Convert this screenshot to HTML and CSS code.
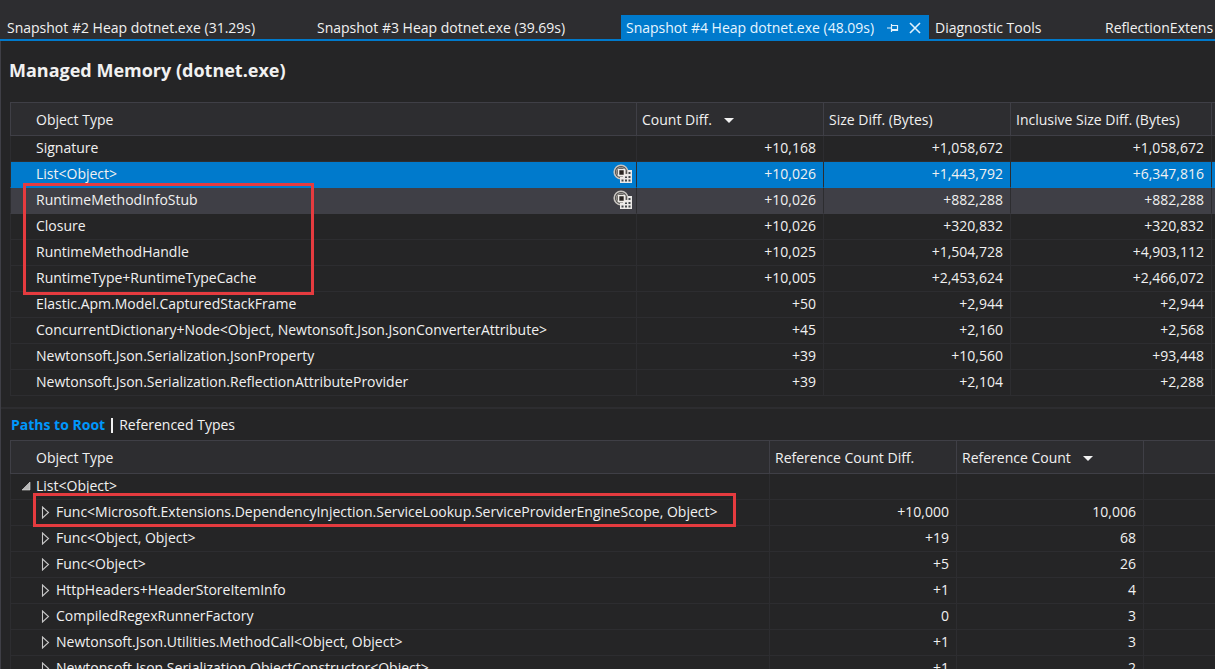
FILE: index.html
```html
<!DOCTYPE html>
<html lang="en">
<head>
<meta charset="utf-8">
<title>Managed Memory (dotnet.exe)</title>
<link rel="stylesheet" href="styles.css">
</head>
<body>
<svg class="defs" aria-hidden="true">
  <symbol id="instances" viewBox="0 0 20 20">
    <circle cx="8" cy="8" r="6.8" fill="#3a3836" stroke="#c8c5c1" stroke-width="1.6"/>
    <circle cx="8" cy="8" r="4.8" fill="none" stroke="#a5a29f" stroke-width="1"/>
    <path d="M10 10h5V6h4v13H7v-6h3z" fill="#ebe9e7"/>
    <path d="M5.500 5.500h6v6h-6z" fill="#292421" stroke="#f0ede9" stroke-width="1.6"/>
    <path d="M15.500 8h2v2h-2zM15.500 12h2v2h-2zM15.500 15.500h2v2h-2zM12 15.500h2v2h-2zM8.500 15.500h2v2h-2zM12 12.500h2v1.500h-2z" fill="#42464a"/>
  </symbol>
  <symbol id="closed" viewBox="0 0 9 13">
    <path d="M1.500 1v11L7.500 6.500z" fill="none" stroke="#c8c8c8" stroke-width="1.1"/>
  </symbol>
  <symbol id="open" viewBox="0 0 10 10"><path d="M9 1v8H1z" fill="#b8b8b8" stroke="#dedede" stroke-width=".6"/></symbol>
</svg>

<nav class="tabs" aria-label="Documents">
  <button class="tab tab-wide">Snapshot #2 Heap dotnet.exe (31.29s)</button>
  <button class="tab tab-wide">Snapshot #3 Heap dotnet.exe (39.69s)</button>
  <div class="tab-active">
    <button class="tab-title" aria-current="page">Snapshot #4 Heap dotnet.exe (48.09s)</button>
    <button class="tab-icon" aria-label="Pin tab"><svg width="12" height="12" viewBox="0 0 12 12" fill="none" stroke="#e2f1fc"><path d="M0 6h4M4.500 2v8M5 3.500h6M5 7.500h6M5 8.500h6M10.500 3v6" stroke-width="1.2"/></svg></button>
    <button class="tab-icon" aria-label="Close tab"><svg width="12" height="12" viewBox="0 0 12 12" fill="none" stroke="#e2f1fc"><path d="M1 1l10 10M11 1L1 11" stroke-width="1.6"/></svg></button>
  </div>
  <button class="tab tab-tools">Diagnostic Tools</button>
  <button class="tab">ReflectionExtens</button>
</nav>

<main class="document">
  <h1 class="title">Managed Memory (dotnet.exe)</h1>

  <section class="pane">
    <table class="grid">
      <colgroup><col><col class="col-number"><col class="col-number"><col class="col-inclusive"><col class="col-end"></colgroup>
      <thead>
        <tr><th>Object Type</th><th>Count Diff.<span class="sort"></span></th><th>Size Diff. (Bytes)</th><th>Inclusive Size Diff. (Bytes)</th><th></th></tr>
      </thead>
      <tbody>
        <tr><td>Signature</td><td>+10,168</td><td>+1,058,672</td><td>+1,058,672</td><td></td></tr>
        <tr class="selected"><td><div class="name">List&lt;Object&gt;<button class="instances" aria-label="View instances"><svg width="20" height="20"><use href="#instances"/></svg></button></div></td><td>+10,026</td><td>+1,443,792</td><td>+6,347,816</td><td></td></tr>
        <tr class="hover"><td><div class="name">RuntimeMethodInfoStub<button class="instances" aria-label="View instances"><svg width="20" height="20"><use href="#instances"/></svg></button></div></td><td>+10,026</td><td>+882,288</td><td>+882,288</td><td></td></tr>
        <tr><td>Closure</td><td>+10,026</td><td>+320,832</td><td>+320,832</td><td></td></tr>
        <tr><td>RuntimeMethodHandle</td><td>+10,025</td><td>+1,504,728</td><td>+4,903,112</td><td></td></tr>
        <tr><td>RuntimeType+RuntimeTypeCache</td><td>+10,005</td><td>+2,453,624</td><td>+2,466,072</td><td></td></tr>
        <tr><td>Elastic.Apm.Model.CapturedStackFrame</td><td>+50</td><td>+2,944</td><td>+2,944</td><td></td></tr>
        <tr><td>ConcurrentDictionary+Node&lt;Object, Newtonsoft.Json.JsonConverterAttribute&gt;</td><td>+45</td><td>+2,160</td><td>+2,568</td><td></td></tr>
        <tr><td>Newtonsoft.Json.Serialization.JsonProperty</td><td>+39</td><td>+10,560</td><td>+93,448</td><td></td></tr>
        <tr><td>Newtonsoft.Json.Serialization.ReflectionAttributeProvider</td><td>+39</td><td>+2,104</td><td>+2,288</td><td></td></tr>
      </tbody>
    </table>
    <div class="mark mark-types"></div>
  </section>

  <div class="views">
    <button class="view view-current">Paths to Root</button><span class="divider"></span><button class="view">Referenced Types</button>
  </div>

  <section class="pane">
    <table class="grid">
      <colgroup><col><col class="col-number"><col class="col-number"><col class="col-rest"></colgroup>
      <thead>
        <tr><th>Object Type</th><th>Reference Count Diff.</th><th>Reference Count<span class="sort"></span></th><th></th></tr>
      </thead>
      <tbody>
        <tr><td class="tree root"><div class="node"><button class="toggle" aria-label="Collapse"><svg width="10" height="10"><use href="#open"/></svg></button>List&lt;Object&gt;</div></td><td></td><td></td><td></td></tr>
        <tr><td class="tree"><div class="node"><button class="toggle" aria-label="Expand"><svg width="9" height="13"><use href="#closed"/></svg></button>Func&lt;Microsoft.Extensions.DependencyInjection.ServiceLookup.ServiceProviderEngineScope, Object&gt;</div></td><td>+10,000</td><td>10,006</td><td></td></tr>
        <tr><td class="tree"><div class="node"><button class="toggle" aria-label="Expand"><svg width="9" height="13"><use href="#closed"/></svg></button>Func&lt;Object, Object&gt;</div></td><td>+19</td><td>68</td><td></td></tr>
        <tr><td class="tree"><div class="node"><button class="toggle" aria-label="Expand"><svg width="9" height="13"><use href="#closed"/></svg></button>Func&lt;Object&gt;</div></td><td>+5</td><td>26</td><td></td></tr>
        <tr><td class="tree"><div class="node"><button class="toggle" aria-label="Expand"><svg width="9" height="13"><use href="#closed"/></svg></button>HttpHeaders+HeaderStoreItemInfo</div></td><td>+1</td><td>4</td><td></td></tr>
        <tr><td class="tree"><div class="node"><button class="toggle" aria-label="Expand"><svg width="9" height="13"><use href="#closed"/></svg></button>CompiledRegexRunnerFactory</div></td><td>0</td><td>3</td><td></td></tr>
        <tr><td class="tree"><div class="node"><button class="toggle" aria-label="Expand"><svg width="9" height="13"><use href="#closed"/></svg></button>Newtonsoft.Json.Utilities.MethodCall&lt;Object, Object&gt;</div></td><td>+1</td><td>3</td><td></td></tr>
        <tr><td class="tree"><div class="node"><button class="toggle" aria-label="Expand"><svg width="9" height="13"><use href="#closed"/></svg></button>Newtonsoft.Json.Serialization.ObjectConstructor&lt;Object&gt;</div></td><td>+1</td><td>2</td><td></td></tr>
      </tbody>
    </table>
    <div class="mark mark-path"></div>
  </section>
</main>
</body>
</html>
```

FILE: styles.css
```css
* { box-sizing: border-box; }

body {
  margin: 0;
  height: 100vh;
  overflow: hidden;
  display: flex;
  flex-direction: column;
  background: #2d2d30;
  color: #f1f1f1;
  font: 14px/20px "Open Sans", "Noto Sans", sans-serif;
}

button {
  border: 0;
  padding: 0;
  background: none;
  color: inherit;
  font: inherit;
  white-space: nowrap;
}

svg { display: block; }

.defs { display: none; }

/* document tabs */
.tabs {
  display: flex;
  flex: none;
  height: 41px;
  padding-top: 15px;
  border-bottom: 2px solid #007acc;
  overflow: hidden;
}

.tab {
  flex: none;
  padding: 2px 6px 0;
  text-align: left;
}

.tab-wide { width: 310px; padding: 2px 7px 0; }
.tab-tools { width: 170px; }

.tab-active {
  flex: none;
  display: flex;
  align-items: center;
  justify-content: space-between;
  width: 308px;
  margin-left: 1px;
  padding: 2px 8px 0 5px;
  background: #007acc;
  color: #e6f5ff;
}

.tab-title { flex: 1; text-align: left; }
.tab-icon { margin-left: 10px; }

/* document body */
.document {
  flex: 1;
  min-height: 0;
  border-left: 1px solid #3f3f46;
  background: #252526;
}

.title {
  margin: 0;
  padding: 15px 8px 18px;
  font-size: 18px;
  font-weight: 700;
  line-height: 28px;
}

.pane {
  position: relative;
  padding: 0 0 0 9px;
}

.grid {
  width: 100%;
  table-layout: fixed;
  border-collapse: separate;
  border-spacing: 0;
}

.col-number { width: 187px; }
.col-inclusive { width: 201px; }
.col-end { width: 4px; }
.col-rest { width: 72px; }

.grid th {
  height: 34px;
  padding: 1px 5px 0;
  border: solid #3f3f46;
  border-width: 1px 0 1px 1px;
  background: #2d2d30;
  font-weight: 400;
  text-align: left;
  white-space: nowrap;
}

.grid td {
  height: 26px;
  padding: 0 7px 1px 5px;
  border: solid #2d2d30;
  border-width: 0 0 1px 1px;
  text-align: right;
  white-space: nowrap;
}

.grid th:first-child,
.grid td:first-child {
  padding-left: 25px;
  text-align: left;
}

.grid th:last-child,
.grid td:last-child { padding: 0; }

.grid td:first-child { padding-right: 3px; }

.grid .selected td { background: #007acc; border-bottom-color: #007acc; }
.grid .hover td { background: #3f3f46; border-bottom-color: #3f3f46; }

.name {
  display: flex;
  align-items: center;
  justify-content: space-between;
}

.sort {
  display: inline-block;
  margin-left: 12px;
  border: 5px solid transparent;
  border-top-color: #f1f1f1;
  border-bottom: 0;
  vertical-align: middle;
}

/* lower pane */
.views {
  display: flex;
  align-items: center;
  gap: 6px;
  margin-top: 11px;
  padding: 6px 10px 5px;
  border-top: 2px solid #2d2d30;
}

.view-current { color: #0097fb; font-weight: 700; }

.divider {
  width: 2px;
  height: 15px;
  background: #f1f1f1;
}

.grid td.tree { padding-left: 30px; }
.grid td.root { padding-left: 10px; }

.node { display: flex; align-items: center; }

.toggle { width: 15px; }

/* highlight frames */
.mark {
  position: absolute;
  border: 3px solid #e53b3f;
  pointer-events: none;
}

.mark-types { left: 22px; top: 81px; width: 291px; height: 112px; }
.mark-path { left: 32px; top: 53px; width: 703px; height: 34px; }
```
